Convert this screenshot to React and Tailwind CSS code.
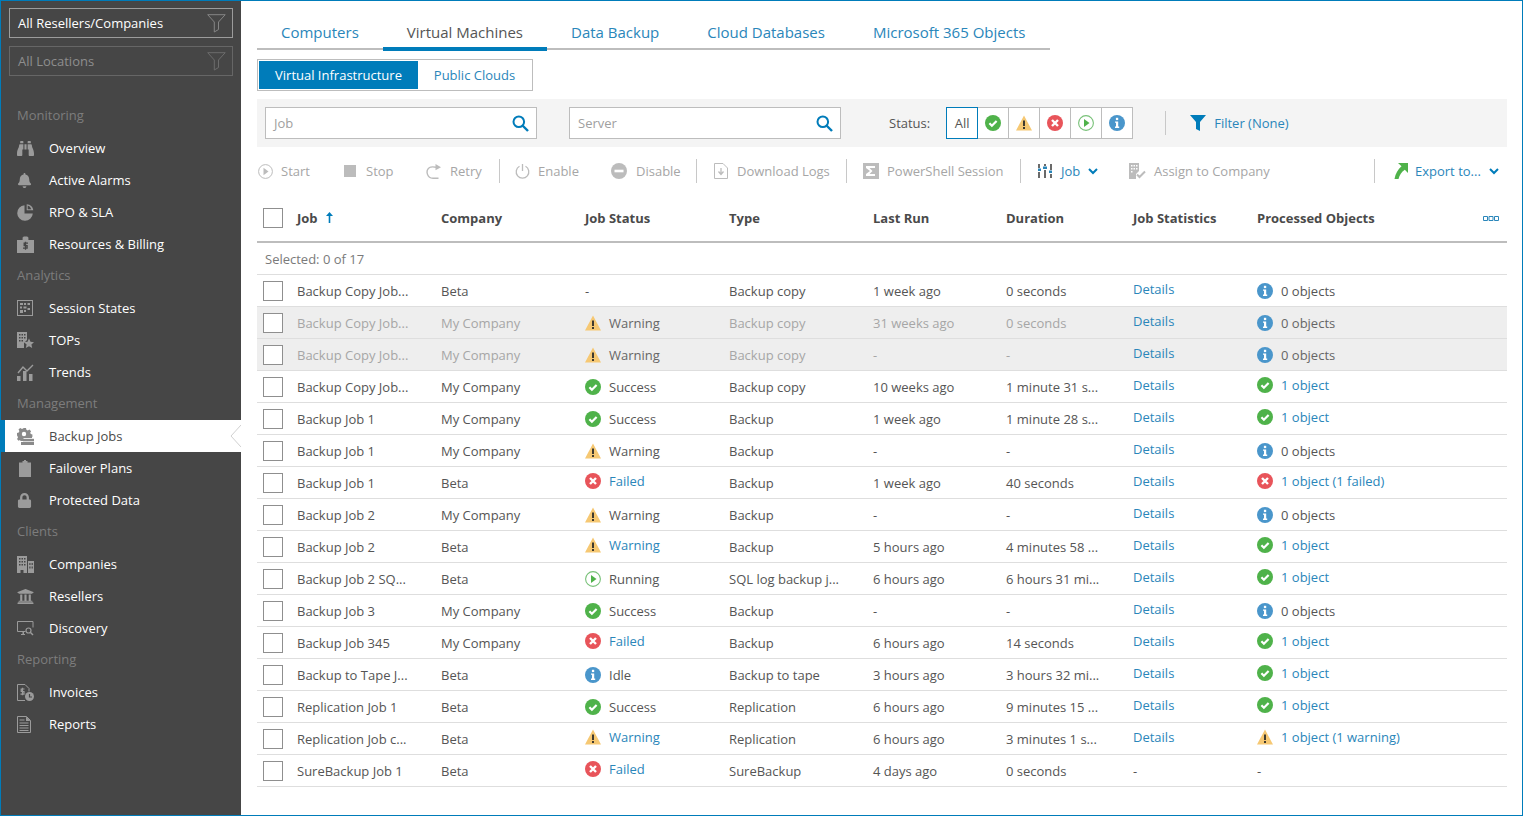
import React from "react";
import { FaBinoculars, FaBell, FaLock, FaUniversity } from "react-icons/fa";

const Ok = () => (
  <svg width="16" height="16" viewBox="0 0 16 16" className="shrink-0">
    <circle cx="8" cy="8" r="8" fill="#4fb24a" />
    <path d="M4.400 8.200l2.500 2.500 4.700-4.700" fill="none" stroke="#fff" strokeWidth="2.200" />
  </svg>
);
const Warn = () => (
  <svg width="16" height="16" viewBox="0 0 16 16" className="shrink-0">
    <path d="M8 .5L16 15.500H0z" fill="#f6c873" />
    <rect x="7" y="5.500" width="2" height="5.500" fill="#3f3a2f" />
    <rect x="7" y="12" width="2" height="2" fill="#3f3a2f" />
  </svg>
);
const Err = () => (
  <svg width="16" height="16" viewBox="0 0 16 16" className="shrink-0">
    <circle cx="8" cy="8" r="8" fill="#e8545a" />
    <path d="M5 5l6 6M11 5l-6 6" fill="none" stroke="#fff" strokeWidth="2.400" />
  </svg>
);
const Run = () => (
  <svg width="16" height="16" viewBox="0 0 16 16" className="shrink-0">
    <circle cx="8" cy="8" r="7.400" fill="#fff" stroke="#78c178" strokeWidth="1.100" />
    <path d="M6 4l5.500 4L6 12z" fill="#4fb24a" />
  </svg>
);
const Info = () => (
  <svg width="16" height="16" viewBox="0 0 16 16" className="shrink-0">
    <circle cx="8" cy="8" r="8" fill="#4a96cb" />
    <rect x="6.900" y="2.800" width="2.300" height="2.300" fill="#fff" />
    <path d="M6 6.400h3.200v5.200h1v1.300H6v-1.300h1V7.700H6z" fill="#fff" />
  </svg>
);

const G = "#9b9b9b";
const icons = {
  overview: <FaBinoculars size={17} color={G} />,
  alarms: <FaBell size={15} color={G} />,
  rpo: (
    <svg width="17" height="17" viewBox="0 0 17 17">
      <path d="M7.500 1.200A7.800 7.800 0 1 0 15.800 9.500H7.500z" fill={G} />
      <path d="M9.700.2v6h6.600A7 7 0 0 0 9.700.2zm1 1.400a5.600 5.600 0 0 1 3.600 3.600h-3.600z" fill={G} fillRule="evenodd" />
    </svg>
  ),
  resources: (
    <svg width="17" height="17" viewBox="0 0 17 17">
      <path d="M0 4h5.600V1.600L6.800.4h3.400l1.200 1.200V4H17v13H0z" fill={G} />
      <path d="M11 7.200H7.200v2.400h2.900v2.600H6M8.500 5.800v8" fill="none" stroke="#464646" strokeWidth="1.300" />
    </svg>
  ),
  session: (
    <svg width="16" height="16" viewBox="0 0 16 16">
      <rect x=".5" y=".5" width="15" height="15" fill="none" stroke={G} />
      <path d="M3 3h3v2H3zM7 3h2v2H7zM10.500 3H13v2h-2.500zM3 6.500h2v2H3zM6.500 6.500h3v2h-3zM3 10h3v3H3zM7 10h2v2H7zM10.500 8h2.500v2h-2.500z" fill={G} />
    </svg>
  ),
  tops: (
    <svg width="17" height="17" viewBox="0 0 17 17">
      <path d="M0 0h10v8l-3 3v5H0z" fill={G} />
      <path d="M2 2h1.500v1.500H2zM4.500 2H6v1.500H4.500zM7 2h1.500v1.500H7zM2 5h1.500v1.500H2zM4.500 5H6v1.500H4.500zM7 5h1.500v1.500H7zM2 8h1.500v1.500H2zM4.500 8H6v1.500H4.500z" fill="#464646" />
      <path d="M12 6.500l1.500 3.300 3.500.4-2.600 2.400.8 3.400-3.200-1.800-3.200 1.800.8-3.400L7 10.200l3.500-.4z" fill={G} />
    </svg>
  ),
  trends: (
    <svg width="17" height="17" viewBox="0 0 17 17">
      <path d="M1 9l5-6 4 4 6-6" fill="none" stroke={G} strokeWidth="1.400" />
      <path d="M0 12h3.500v5H0zM6 7h3.500v10H6zM12 10h3.500v7H12z" fill={G} />
    </svg>
  ),
  jobs: (
    <svg width="17" height="17" viewBox="0 0 17 17">
      <path d="M6.500 0h2.500l.4 1.800 1.400.6 1.600-.9 1.700 1.700-.9 1.600.6 1.300 1.600.5v2.400H15V10H6.500v3H3.500l-.5-1-1.500.8L0 11l1-1.600-.6-1.500L0 7.500V5l1.800-.5.6-1.400-.9-1.600L3.200 0 5 .9l1.500-.6z" fill="#8a8a8a" />
      <circle cx="7" cy="6" r="2.200" fill="#fff" />
      <rect x="6" y="10.800" width="11" height="2.500" fill="#8a8a8a" />
      <rect x="4" y="14" width="13" height="3" fill="#8a8a8a" />
    </svg>
  ),
  failover: (
    <svg width="16" height="17" viewBox="0 0 16 17">
      <path d="M2 2.500h3.500V1h1.500V0h2v1h1.500v1.500H14V17H2z" fill={G} />
    </svg>
  ),
  lock: <FaLock size={15} color={G} />,
  companies: (
    <svg width="17" height="17" viewBox="0 0 17 17">
      <path d="M0 0h10v17H6.500v-3h-3v3H0z" fill={G} />
      <path d="M2 2h1.500v1.500H2zM4.500 2H6v1.500H4.500zM7 2h1.500v1.500H7zM2 5h1.500v1.500H2zM4.500 5H6v1.500H4.500zM7 5h1.500v1.500H7zM2 8h1.500v1.500H2zM4.500 8H6v1.500H4.500zM7 8h1.500v1.500H7z" fill="#464646" />
      <path d="M11 5h6v12h-6zM12.300 7v2h1.200V7zM14.600 7v2h1.200V7zM12.300 10.500v2h1.200v-2zM14.600 10.500v2h1.200v-2z" fill={G} fillRule="evenodd" />
    </svg>
  ),
  resellers: <FaUniversity size={17} color={G} />,
  discovery: (
    <svg width="17" height="17" viewBox="0 0 17 17">
      <path d="M8.500 11.500H.5v-10h15.500v6" fill="none" stroke={G} />
      <path d="M4 14h4v1H4zM5.500 12h1.500v2H5.500z" fill={G} />
      <circle cx="11.500" cy="10.500" r="2.500" fill="none" stroke={G} strokeWidth="1.200" />
      <path d="M13.500 12.500l2.500 2.500" stroke={G} strokeWidth="1.400" />
    </svg>
  ),
  invoices: (
    <svg width="17" height="17" viewBox="0 0 17 17">
      <path d="M8 16.500H.5V.5h7.500l4 4v3" fill="none" stroke={G} />
      <path d="M7.500 5H4.200v2.500H7v2.600H3.500M5.500 3.800v7.500" fill="none" stroke={G} strokeWidth="1.200" />
      <circle cx="12.500" cy="12.500" r="4.500" fill={G} />
      <path d="M12.500 10v3h2.500" fill="none" stroke="#464646" strokeWidth="1.200" />
    </svg>
  ),
  reports: (
    <svg width="14" height="17" viewBox="0 0 14 17">
      <path d="M.5.500h9l4 4v12H.5z" fill="none" stroke={G} />
      <path d="M9 1v4h4.500L9 .5z" fill={G} />
      <path d="M2.500 3.500h5v1h-5zM2.500 6.500h9v1h-9zM2.500 9h9v1h-9zM2.500 11.500h9v1h-9zM2.500 14h9v1h-9z" fill={G} />
    </svg>
  ),
};

const nav = [
  { label: "Monitoring" },
  { t: "Overview", i: "overview" },
  { t: "Active Alarms", i: "alarms" },
  { t: "RPO & SLA", i: "rpo" },
  { t: "Resources & Billing", i: "resources" },
  { label: "Analytics" },
  { t: "Session States", i: "session" },
  { t: "TOPs", i: "tops" },
  { t: "Trends", i: "trends" },
  { label: "Management" },
  { t: "Backup Jobs", i: "jobs", active: true },
  { t: "Failover Plans", i: "failover" },
  { t: "Protected Data", i: "lock" },
  { label: "Clients" },
  { t: "Companies", i: "companies" },
  { t: "Resellers", i: "resellers" },
  { t: "Discovery", i: "discovery" },
  { label: "Reporting" },
  { t: "Invoices", i: "invoices" },
  { t: "Reports", i: "reports" },
];

const Funnel = ({ c }) => (
  <svg width="19" height="19" viewBox="0 0 19 19" fill="none" stroke={c}>
    <path d="M.7.700h17.500l-6.700 7.300v7.500l-4.200 2.500V8z" />
  </svg>
);

function SideFilter({ text, on }) {
  return (
    <div className={`flex h-[30px] w-[224px] items-center justify-between border pl-2 pr-[6px] text-[13px] ${on ? "border-[#9c9c9c] text-white" : "border-[#666666] text-[#8e8e8e]"}`}>
      <span className="pt-0.5">{text}</span>
      <Funnel c={on ? "#858585" : "#6c6c6c"} />
    </div>
  );
}

function Sidebar() {
  return (
    <aside className="w-[240px] shrink-0 bg-[#464646] pt-[7px]">
      <div className="flex flex-col gap-2 px-2">
        <SideFilter text="All Resellers/Companies" on />
        <SideFilter text="All Locations" />
      </div>
      <nav className="mt-6">
        {nav.map((n) =>
          n.label ? (
            <div key={n.label} className="flex h-8 items-center pl-4 text-[13px] text-[#7d7d7d]">
              <span>{n.label}</span>
            </div>
          ) : n.active ? (
            <div key={n.t} className="relative flex h-8 items-center border-l-4 border-[#007cba] bg-white pl-3 text-[13px] text-[#4a4a4a]">
              <span className="flex w-8 items-center">{icons[n.i]}</span>
              <span className="pt-0.5">{n.t}</span>
              <svg width="11" height="24" viewBox="0 0 11 24" className="absolute right-0 top-1" fill="none" stroke="#d0d0d0">
                <path d="M11 1L1 12l10 11" />
              </svg>
            </div>
          ) : (
            <div key={n.t} className="flex h-8 items-center pl-4 text-[13px] text-white">
              <span className="flex w-8 items-center">{icons[n.i]}</span>
              <span className="pt-0.5">{n.t}</span>
            </div>
          )
        )}
      </nav>
    </aside>
  );
}

function Tabs() {
  const tabs = ["Computers", "Virtual Machines", "Data Backup", "Cloud Databases", "Microsoft 365 Objects"];
  return (
    <div className="flex h-[34px] w-[793px] items-start border-b-2 border-[#bdbdbd] text-[15px] leading-[32px]">
      {tabs.map((t) => (
        <div
          key={t}
          className={t === "Virtual Machines" ? "h-[35px] border-b-4 border-[#007cba] px-6 text-[#555555]" : "h-8 px-6 text-[#2a86ba]"}
        >
          {t}
        </div>
      ))}
    </div>
  );
}

const Search = () => (
  <svg width="17" height="17" viewBox="0 0 17 17" fill="none" stroke="#007cba">
    <circle cx="6.800" cy="6.800" r="5.300" strokeWidth="2" />
    <path d="M10.500 10.500l5.500 5.500" strokeWidth="2.400" />
  </svg>
);

function SearchBox({ ph, cls }) {
  return (
    <div className={`flex h-8 w-[272px] items-center justify-between border border-[#bdbdbd] bg-white pl-2 pr-[7px] text-[13px] text-[#a0a0a0] ${cls}`}>
      <span className="pt-0.5">{ph}</span>
      <Search />
    </div>
  );
}

function FilterBar() {
  const btn = "flex h-8 w-[31px] items-center justify-center border-y border-r border-[#bdbdbd] bg-white";
  return (
    <div className="mt-2 flex h-12 items-center bg-[#f4f4f4] pl-2 text-[13px]">
      <SearchBox ph="Job" />
      <SearchBox ph="Server" cls="ml-8" />
      <span className="ml-12 pt-0.5 text-[#555555]">Status:</span>
      <div className="ml-4 flex">
        <div className="flex h-8 w-[32px] items-center justify-center border border-[#007cba] bg-white pt-0.5 text-[#555555]">All</div>
        <div className={btn}><Ok /></div>
        <div className={btn}><Warn /></div>
        <div className={btn}><Err /></div>
        <div className={btn}><Run /></div>
        <div className={btn}><Info /></div>
      </div>
      <div className="ml-8 h-6 w-px bg-[#c8c8c8]" />
      <svg width="16" height="16" viewBox="0 0 16 16" className="ml-6">
        <path d="M0 0h16l-6 7v9l-4-2V7z" fill="#007cba" />
      </svg>
      <span className="ml-2 pt-0.5 text-[#2a86ba]">Filter (None)</span>
    </div>
  );
}

const I = "#bcbcbc";
const Chevron = ({ cls }) => (
  <svg width="10" height="7" viewBox="0 0 10 7" fill="none" stroke="#007cba" strokeWidth="2" className={cls}>
    <path d="M1 1l4 4 4-4" />
  </svg>
);
const Divider = () => <div className="h-6 w-px shrink-0 bg-[#c8c8c8]" />;

function Tool({ w, iw, icon, text, blue }) {
  return (
    <div className={`flex shrink-0 items-center ${w}`}>
      <span className={`flex shrink-0 items-center ${iw}`}>{icon}</span>
      <span className={`pt-0.5 ${blue ? "text-[#2a86ba]" : "text-[#a6a6a6]"}`}>{text}</span>
    </div>
  );
}

function Toolbar() {
  return (
    <div className="flex h-12 items-center text-[13px]">
      <Tool w="w-[87px] pl-px" iw="w-[23px]" text="Start" icon={
        <svg width="15" height="15" viewBox="0 0 15 15"><circle cx="7.500" cy="7.500" r="6.900" fill="none" stroke={I} /><path d="M5.500 3.800l5 3.700-5 3.700z" fill={I} /></svg>
      } />
      <Tool w="w-[81px]" iw="w-[22px]" text="Stop" icon={<span className="block h-3 w-3 bg-[#bcbcbc]" />} />
      <Tool w="w-[74px]" iw="w-[25px]" text="Retry" icon={
        <svg width="17" height="15" viewBox="0 0 17 15" fill="none">
          <path d="M13.500 14.300H8A6 6 0 0 1 4.500 3.500C6 2.700 8 2.700 11 3.200" stroke={I} strokeWidth="1.400" />
          <path d="M10.500 0L16 3.200l-5.500 3z" fill={I} />
        </svg>
      } />
      <Divider />
      <Tool w="w-[111px] pl-[15px]" iw="w-[23px]" text="Enable" icon={
        <svg width="15" height="16" viewBox="0 0 15 16" fill="none" stroke={I} strokeWidth="1.300"><path d="M4.500 3.300a6.300 6.300 0 1 0 6 0" /><path d="M7.500 1v7" /></svg>
      } />
      <Tool w="w-[85px]" iw="w-[25px]" text="Disable" icon={
        <svg width="16" height="16" viewBox="0 0 16 16"><circle cx="8" cy="8" r="8" fill={I} /><rect x="3.500" y="6.700" width="9" height="2.600" fill="#fff" /></svg>
      } />
      <Divider />
      <Tool w="w-[149px] pl-[17px]" iw="w-[23px]" text="Download Logs" icon={
        <svg width="14" height="16" viewBox="0 0 14 16" fill="none" stroke={I}><path d="M.5.500h8.500l4.500 4.500v10.500H.5z" /><path d="M7 5v6M4.500 8.500L7 11.500l2.500-3" strokeWidth="1.300" /></svg>
      } />
      <Divider />
      <Tool w="w-[173px] pl-4" iw="w-[24px]" text="PowerShell Session" icon={
        <svg width="16" height="16" viewBox="0 0 16 16"><rect width="16" height="16" fill={I} /><path d="M3 3h9v2H6.500l3 3-3 3H12v2H3v-2l4-3-4-3z" fill="#fff" /></svg>
      } />
      <Divider />
      <div className="flex w-[108px] shrink-0 items-center pl-4">
        <span className="flex w-[24px] shrink-0 items-center pl-px">
          <svg width="14" height="14" viewBox="0 0 14 14">
            <path d="M0 0h2v4H0zM0 8h2v6H0zM6 0h2v2H6zM6 6h2v8H6zM12 0h2v6h-2zM12 10h2v4h-2z" fill="#6a6a6a" />
            <path d="M0 4.500h3V7H0zM5 2.500h4V5H5zM11 6.500h3V9h-3z" fill="#2a86ba" />
          </svg>
        </span>
        <span className="pt-0.5 text-[#2a86ba]">Job</span>
        <Chevron cls="ml-2" />
      </div>
      <Tool w="w-[245px]" iw="w-[25px]" text="Assign to Company" icon={
        <svg width="17" height="16" viewBox="0 0 17 16"><path d="M0 0h10v8l-3 3v5H0z" fill={I} /><path d="M2 2h1.500v1.500H2zM4.500 2H6v1.500H4.500zM7 2h1.500v1.500H7zM2 5h1.500v1.500H2zM4.500 5H6v1.500H4.500zM7 5h1.500v1.500H7zM2 8h1.500v1.500H2z" fill="#fff" /><path d="M8 11.500l2.500 2.500L16 8.500" fill="none" stroke={I} strokeWidth="2" /></svg>
      } />
      <Divider />
      <div className="flex shrink-0 items-center pl-[17px]">
        <span className="flex w-[23px] shrink-0 items-center">
          <svg width="16" height="16" viewBox="0 0 16 16"><path d="M6 0h10v10l-3.200-3.200C9.500 9 7.500 12 6.500 16H2.500C3.500 10.500 6 6.500 9.500 3.300z" fill="#4fb24a" /></svg>
        </span>
        <span className="w-[74px] pt-0.5 text-[#2a86ba]">Export to...</span>
        <Chevron />
      </div>
    </div>
  );
}

const GRID = "grid grid-cols-[184px_144px_144px_144px_133px_127px_124px_1fr] items-center";
const Check = () => <span className="block h-5 w-5 shrink-0 border border-[#8f8f8f] bg-white" />;

const S = { ok: Ok, warn: Warn, err: Err, run: Run, info: Info };
const rows = [
  ["Backup Copy Job...", "Beta", null, "-", 0, "Backup copy", "1 week ago", "0 seconds", 1, "info", "0 objects", 0],
  ["Backup Copy Job...", "My Company", "warn", "Warning", 0, "Backup copy", "31 weeks ago", "0 seconds", 1, "info", "0 objects", 0, true],
  ["Backup Copy Job...", "My Company", "warn", "Warning", 0, "Backup copy", "-", "-", 1, "info", "0 objects", 0, true],
  ["Backup Copy Job...", "My Company", "ok", "Success", 0, "Backup copy", "10 weeks ago", "1 minute 31 s...", 1, "ok", "1 object", 1],
  ["Backup Job 1", "My Company", "ok", "Success", 0, "Backup", "1 week ago", "1 minute 28 s...", 1, "ok", "1 object", 1],
  ["Backup Job 1", "My Company", "warn", "Warning", 0, "Backup", "-", "-", 1, "info", "0 objects", 0],
  ["Backup Job 1", "Beta", "err", "Failed", 1, "Backup", "1 week ago", "40 seconds", 1, "err", "1 object (1 failed)", 1],
  ["Backup Job 2", "My Company", "warn", "Warning", 0, "Backup", "-", "-", 1, "info", "0 objects", 0],
  ["Backup Job 2", "Beta", "warn", "Warning", 1, "Backup", "5 hours ago", "4 minutes 58 ...", 1, "ok", "1 object", 1],
  ["Backup Job 2 SQ...", "Beta", "run", "Running", 0, "SQL log backup j...", "6 hours ago", "6 hours 31 mi...", 1, "ok", "1 object", 1],
  ["Backup Job 3", "My Company", "ok", "Success", 0, "Backup", "-", "-", 1, "info", "0 objects", 0],
  ["Backup Job 345", "My Company", "err", "Failed", 1, "Backup", "6 hours ago", "14 seconds", 1, "ok", "1 object", 1],
  ["Backup to Tape J...", "Beta", "info", "Idle", 0, "Backup to tape", "3 hours ago", "3 hours 32 mi...", 1, "ok", "1 object", 1],
  ["Replication Job 1", "Beta", "ok", "Success", 0, "Replication", "6 hours ago", "9 minutes 15 ...", 1, "ok", "1 object", 1],
  ["Replication Job c...", "Beta", "warn", "Warning", 1, "Replication", "6 hours ago", "3 minutes 1 s...", 1, "warn", "1 object (1 warning)", 1],
  ["SureBackup Job 1", "Beta", "err", "Failed", 1, "SureBackup", "4 days ago", "0 seconds", 0, null, "-", 0],
];

function Row({ r }) {
  const [job, co, st, stText, stLink, type, last, dur, det, oi, oText, oLink, dim] = r;
  const SI = st && S[st];
  const OI = oi && S[oi];
  const strong = dim ? "text-[#666666]" : "";
  return (
    <div className={`${GRID} h-8 border-b border-[#dedede] ${dim ? "bg-[#eeeeee] text-[#a6a6a6]" : "text-[#555555]"}`}>
      <div className="flex items-center pl-[6px]">
        <Check />
        <span className="ml-[14px] pt-0.5">{job}</span>
      </div>
      <div className="pt-0.5">{co}</div>
      <div className={`flex items-center gap-2 ${strong} ${stLink ? "pb-1 text-[#2a86ba]" : ""}`}>
        {SI && <SI />}
        <span className="pt-0.5">{stText}</span>
      </div>
      <div className="pt-0.5">{type}</div>
      <div className="pt-0.5">{last}</div>
      <div className="pt-0.5">{dur}</div>
      {det ? <div className="pb-0.5 text-[#2a86ba]">Details</div> : <div className="pt-0.5">-</div>}
      <div className={`flex items-center gap-2 ${strong} ${oLink ? "pb-1 text-[#2a86ba]" : ""}`}>
        {OI && <OI />}
        <span className="pt-0.5">{oText}</span>
      </div>
    </div>
  );
}

function Table() {
  const heads = ["Company", "Job Status", "Type", "Last Run", "Duration", "Job Statistics"];
  return (
    <div className="text-[13px]">
      <div className={`${GRID} h-12 border-b-2 border-[#bdbdbd] font-bold text-[#4a4a4a]`}>
        <div className="flex items-center pl-[6px]">
          <Check />
          <span className="ml-[14px] pt-0.5">Job</span>
          <svg width="7" height="11" viewBox="0 0 7 11" className="ml-2 mb-0.5" fill="#007cba">
            <path d="M3.500 0L7 4H4.300v7H2.700V4H0z" />
          </svg>
        </div>
        {heads.map((h) => (
          <div key={h} className="pt-0.5">{h}</div>
        ))}
        <div className="flex items-center justify-between pr-2">
          <span className="pt-0.5">Processed Objects</span>
          <svg width="16" height="5" viewBox="0 0 16 5" fill="none" stroke="#2a86ba">
            <path d="M.5.500h4v4h-4zM6 .500h4v4H6zM11.500.500h4v4h-4z" />
          </svg>
        </div>
      </div>
      <div className="flex h-8 items-center border-b border-[#dedede] pl-2 pt-0.5 text-[#7a7a7a]">Selected: 0 of 17</div>
      {rows.map((r, i) => (
        <Row key={i} r={r} />
      ))}
    </div>
  );
}

export default function App() {
  return (
    <div className="flex h-screen w-full overflow-hidden border border-[#007cba] bg-white font-['Open_Sans',sans-serif]">
      <Sidebar />
      <main className="min-w-0 flex-1 pl-4 pr-[15px] pt-[15px]">
        <Tabs />
        <div className="mt-[9px] flex h-8 w-[276px] border border-[#bdbdbd] p-px text-[13px]">
          <div className="flex w-[159px] items-center justify-center bg-[#007cba] pt-0.5 text-white">Virtual Infrastructure</div>
          <div className="flex flex-1 items-center justify-center pt-0.5 text-[#2a86ba]">Public Clouds</div>
        </div>
        <FilterBar />
        <Toolbar />
        <Table />
      </main>
    </div>
  );
}
